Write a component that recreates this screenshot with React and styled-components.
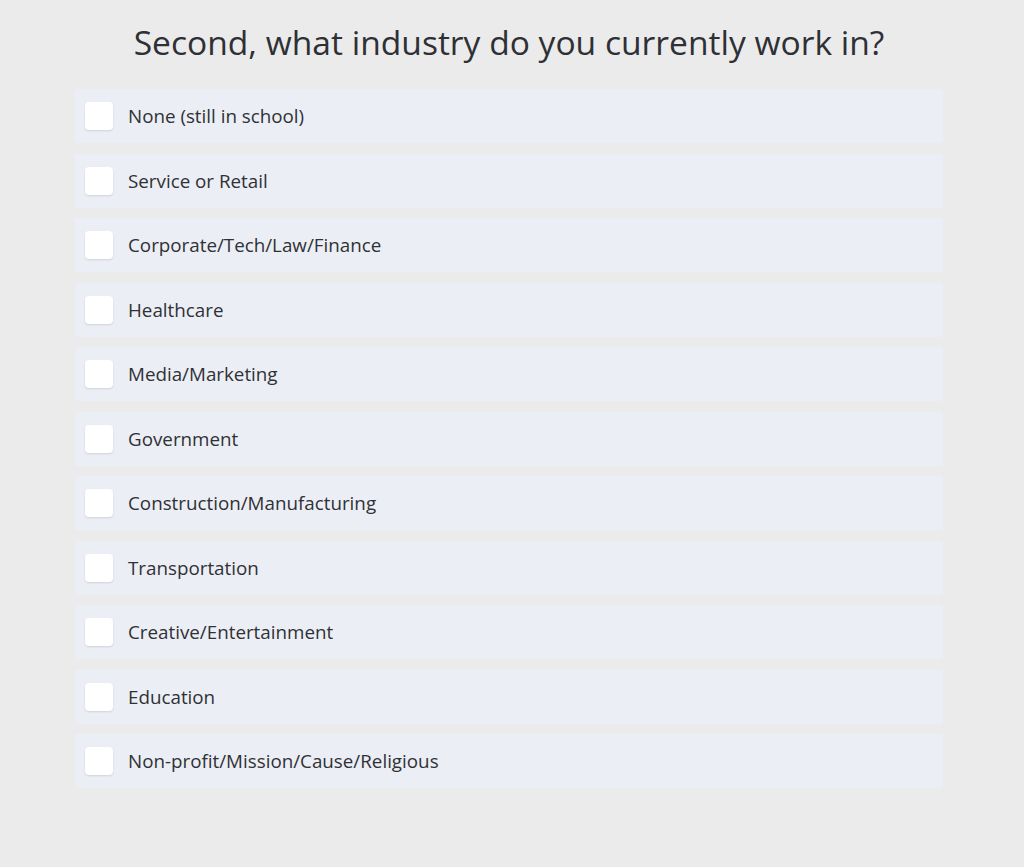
import React from "react";
import styled, { createGlobalStyle } from "styled-components";

const Global = createGlobalStyle`
  html, body { margin: 0; padding: 0; background: #ebebeb; }
  body { font-family: "Open Sans", "Noto Sans", sans-serif; color: #2f3033; }
`;

const Page = styled.div`
  width: 1018px;
  height: 867px;
  display: flex;
  flex-direction: column;
  align-items: center;
  background: #ebebeb;
`;

const Title = styled.h1`
  margin: 17px 0 0 0;
  font-weight: 400;
  font-size: 33.6px;
  line-height: 50px;
  color: #2e3035;
  letter-spacing: 0;
`;

const List = styled.div`
  margin-top: 22px;
  width: 868px;
  display: flex;
  flex-direction: column;
  gap: 10.5px;
`;

const Row = styled.label`
  height: 54px;
  display: flex;
  align-items: center;
  gap: 15px;
  padding-left: 10px;
  background: #eceef6;
  border-radius: 3px;
  cursor: pointer;
`;

const Box = styled.span`
  width: 28px;
  height: 28px;
  border-radius: 4px;
  background: #ffffff;
  box-shadow: 0 1px 2px rgba(0, 0, 0, 0.12);
  flex: none;
`;

const Text = styled.span`
  font-size: 18.8px;
  color: #2f3134;
`;

const options = [
  "None (still in school)",
  "Service or Retail",
  "Corporate/Tech/Law/Finance",
  "Healthcare",
  "Media/Marketing",
  "Government",
  "Construction/Manufacturing",
  "Transportation",
  "Creative/Entertainment",
  "Education",
  "Non-profit/Mission/Cause/Religious",
];

export default function App() {
  return (
    <Page>
      <Global />
      <Title>Second, what industry do you currently work in?</Title>
      <List>
        {options.map((o) => (
          <Row key={o}>
            <Box />
            <Text>{o}</Text>
          </Row>
        ))}
      </List>
    </Page>
  );
}
